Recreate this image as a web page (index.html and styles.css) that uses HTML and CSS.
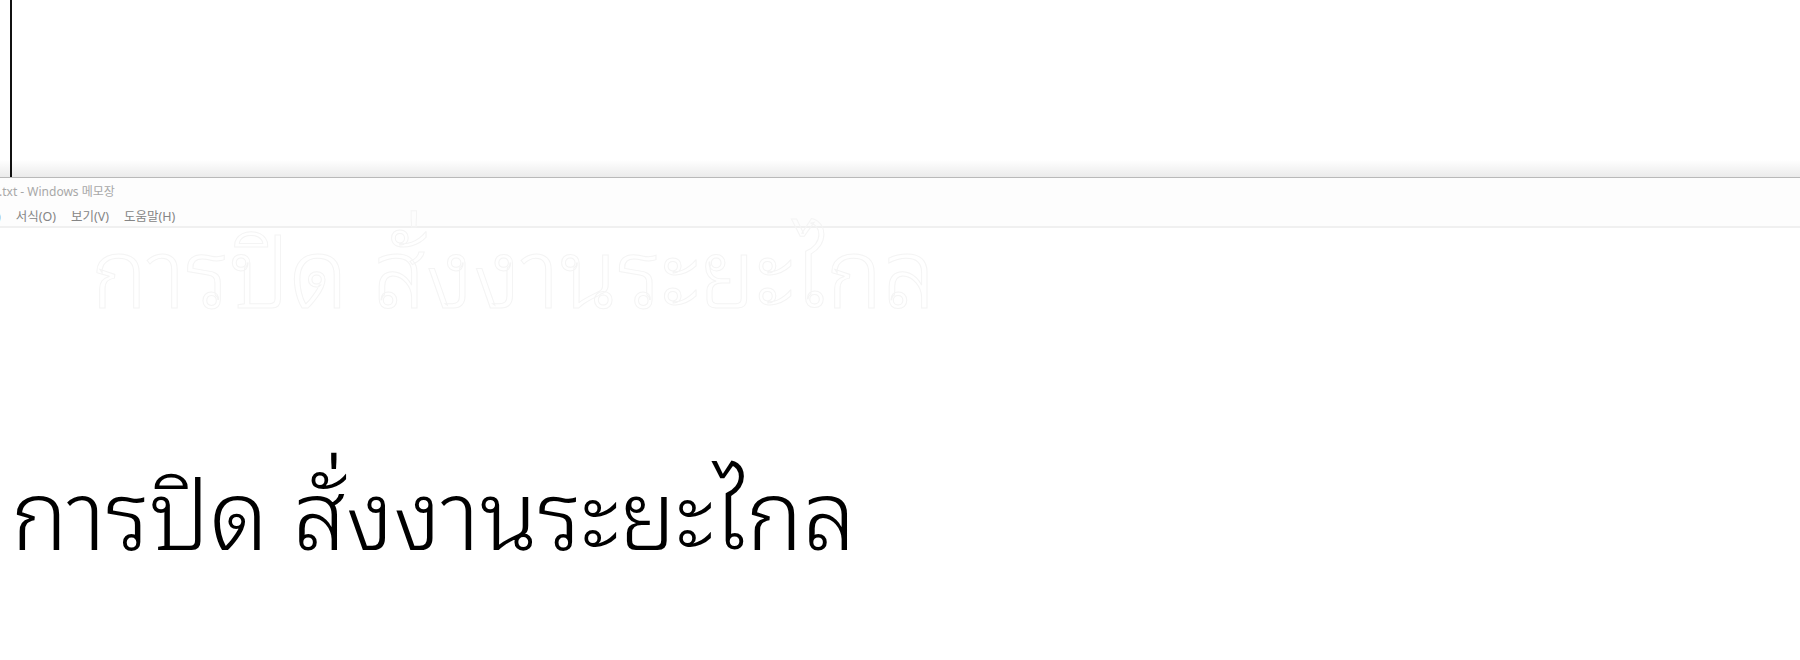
FILE: index.html
```html
<!DOCTYPE html>
<html lang="ko">
<head>
<meta charset="utf-8">
<title>메모장</title>
<link rel="stylesheet" href="styles.css">
</head>
<body>
  <div class="screen">
    <div class="top">
      <div class="caret"></div>
    </div>
    <div class="window">
      <div class="title">.txt - Windows 메모장</div>
      <div class="menu">
        <span class="menu-item cut">)</span>
        <span class="menu-item">서식(O)</span>
        <span class="menu-item">보기(V)</span>
        <span class="menu-item">도움말(H)</span>
      </div>
    </div>
    <div class="content">
      <div class="ghost">การปิด สั่งงานระยะไกล</div>
      <div class="headline">การปิด สั่งงานระยะไกล</div>
    </div>
  </div>
</body>
</html>
```
FILE: styles.css
```css
html, body {
  margin: 0;
  padding: 0;
  background: #ffffff;
}

.screen {
  width: 1800px;
  height: 660px;
  overflow: hidden;
  display: flex;
  flex-direction: column;
}

.top {
  height: 177px;
  padding-left: 10px;
  display: flex;
  background: linear-gradient(to bottom, #ffffff 0, #ffffff 160px, #ebebeb 177px);
  border-bottom: 1px solid #b9b9b9;
  flex-shrink: 0;
}

.caret {
  width: 2px;
  background: #111111;
}

.window {
  background: #fdfdfd;
  border-bottom: 2px solid #f0f0f0;
  padding-bottom: 1px;
  font-family: "Noto Sans", "Noto Sans CJK KR", sans-serif;
  flex-shrink: 0;
}

.title {
  margin-top: 6px;
  line-height: 16px;
  font-size: 12px;
  color: #a8a8a8;
  margin-left: -1px;
  white-space: nowrap;
}

.menu {
  margin-top: 9px;
  line-height: 16px;
  font-size: 12.5px;
  color: #858585;
  display: flex;
  gap: 15px;
  margin-left: -3px;
  white-space: nowrap;
}

.content {
  font-family: "Noto Sans Thai Looped", "Waree", "Loma", "Garuda", "Noto Sans Thai", "Noto Sans", sans-serif;
  font-weight: 300;
  font-size: 95px;
  line-height: 95px;
  white-space: nowrap;
}

.ghost {
  margin-left: 91px;
  margin-top: -10px;
  color: transparent;
  -webkit-text-stroke: 1px #f4f4f4;
}

.headline {
  margin-left: 11px;
  margin-top: 147px;
  color: #000000;
}
```
